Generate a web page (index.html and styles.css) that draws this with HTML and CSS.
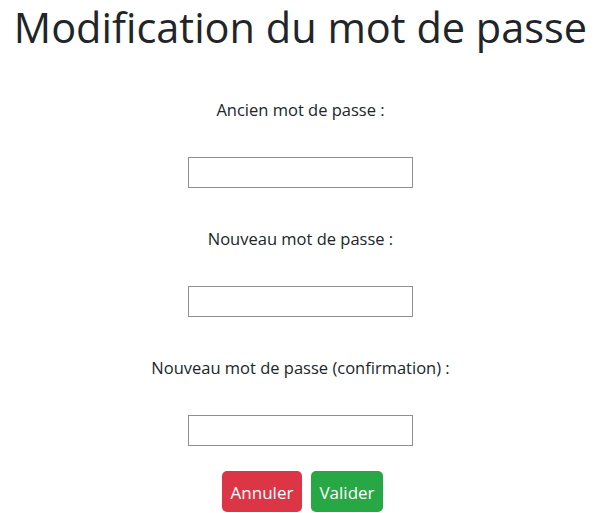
FILE: index.html
```html
<!DOCTYPE html>
<html lang="fr">
<head>
<meta charset="utf-8">
<title>Modification du mot de passe</title>
<link rel="stylesheet" href="styles.css">
</head>
<body>
<h1 class="title">Modification du mot de passe</h1>
<form class="form">
  <div class="group">
    <label class="label" for="old">Ancien mot de passe :</label>
    <input class="field" type="password" id="old">
  </div>
  <div class="group">
    <label class="label" for="new">Nouveau mot de passe :</label>
    <input class="field" type="password" id="new">
  </div>
  <div class="group group-last">
    <label class="label" for="conf">Nouveau mot de passe (confirmation) :</label>
    <input class="field" type="password" id="conf">
  </div>
  <div class="actions">
    <button type="button" class="btn btn-danger">Annuler</button>
    <button type="submit" class="btn btn-success">Valider</button>
  </div>
</form>
</body>
</html>
```
FILE: styles.css
```css
html, body {
  margin: 0;
  padding: 0;
  background: #fff;
}
body {
  font-family: "Open Sans", "Noto Sans", sans-serif;
  color: #212529;
  text-align: center;
}
.title {
  margin: 0;
  padding-top: 3px;
  font-size: 41.5px;
  font-weight: 400;
  line-height: 48px;
  white-space: nowrap;
}
.form {
  display: flex;
  flex-direction: column;
  align-items: center;
  padding-top: 47px;
}
.group {
  display: flex;
  flex-direction: column;
  align-items: center;
  margin-bottom: 39px;
}
.group-last {
  margin-bottom: 25px;
}
.label {
  display: block;
  font-size: 16.5px;
  line-height: 24px;
  margin-bottom: 35px;
}
.field {
  box-sizing: border-box;
  width: 225px;
  height: 31px;
  margin: 0;
  border: 1px solid #8f8f8f;
  border-radius: 0;
  background: #fff;
}
.actions {
  display: flex;
  gap: 9px;
  justify-content: center;
  padding-left: 4px;
}
.btn {
  font-family: "Open Sans", "Noto Sans", sans-serif;
  font-size: 17px;
  height: 41px;
  padding: 2px 0 0;
  border: none;
  border-radius: 5px;
  color: #fff;
}
.btn-danger {
  background: #dc3545;
  width: 80px;
}
.btn-success {
  background: #28a745;
  width: 72px;
}
```
